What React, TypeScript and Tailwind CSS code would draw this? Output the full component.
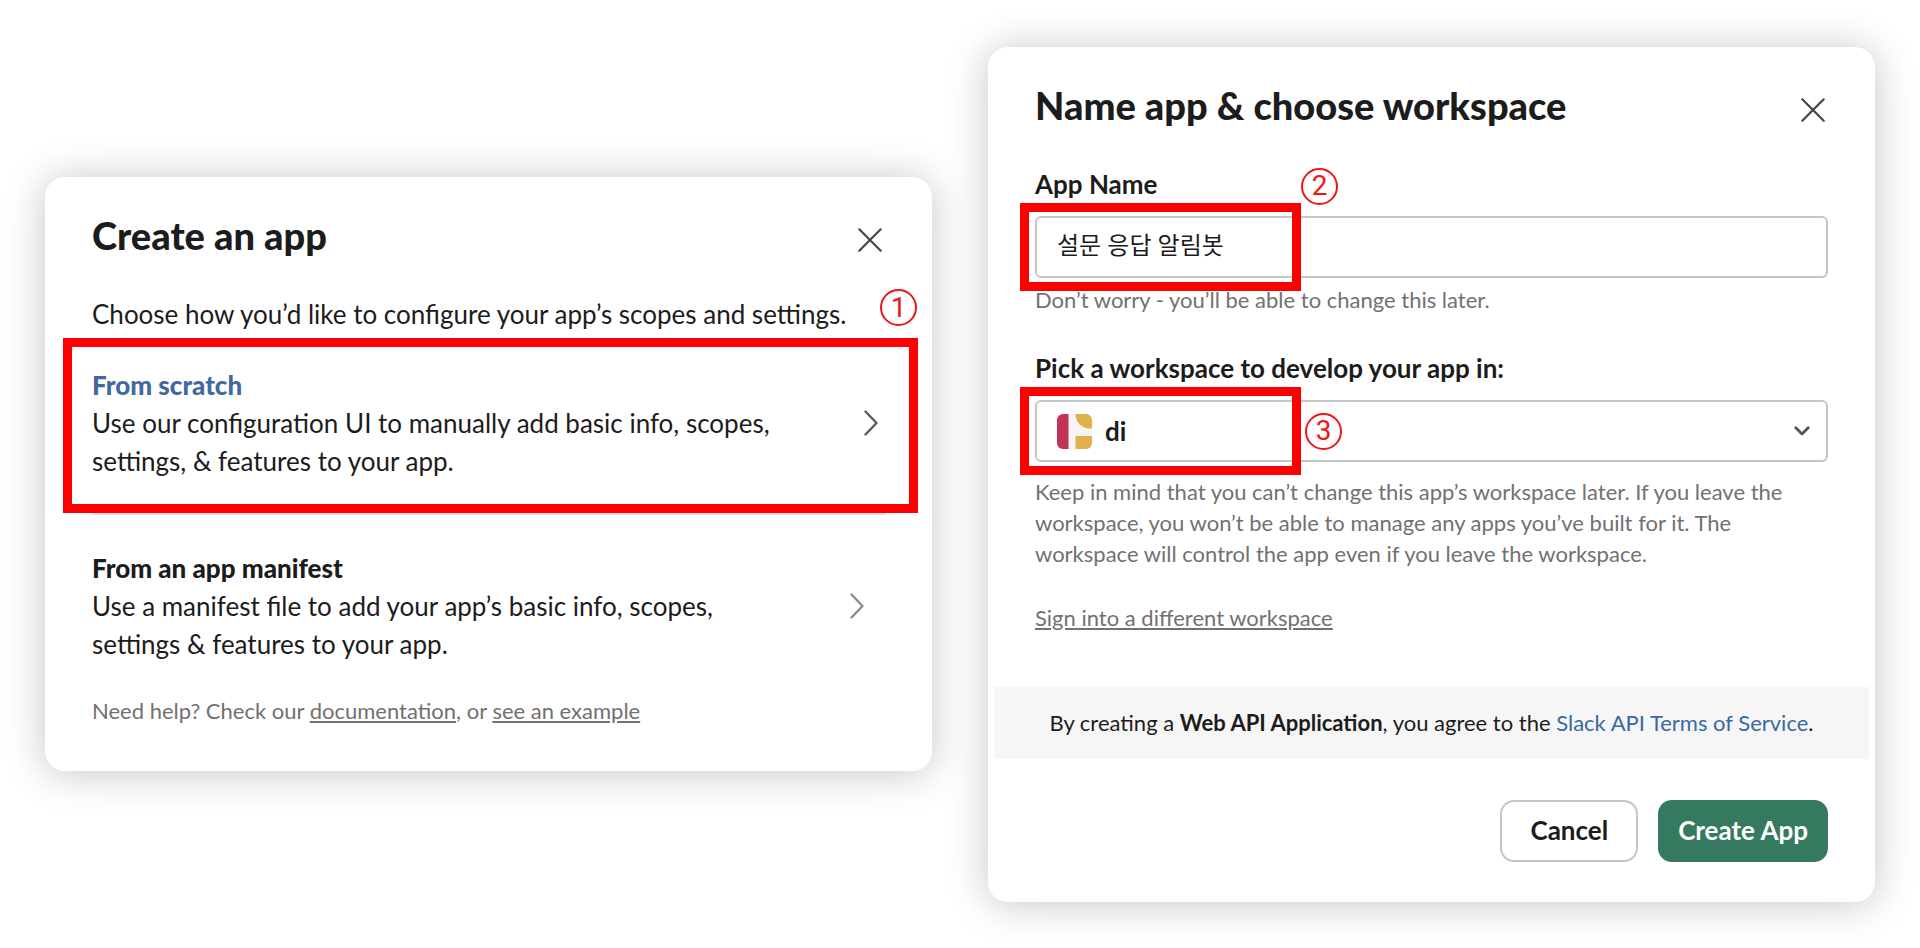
import type { ReactNode } from "react";

const outline = "pointer-events-none absolute border-9 border-[#ff0000]";
const marker =
  "pointer-events-none absolute flex size-[37px] items-center justify-center rounded-full border-2 border-[#ee1616] font-['Roboto',sans-serif] text-[28px] leading-8 font-normal text-[#ee1616]";
const heading = "text-[38px] leading-[46px] font-black";
const label = "text-[26px] leading-[38px] font-bold";
const hint = "text-[22px] leading-[31px] text-[#717171]";
const field =
  "block h-[62px] w-full rounded-md border-2 border-[#c6c6c6] bg-white outline-none";

function CloseButton() {
  return (
    <button type="button" aria-label="Close" className="mt-[11px] p-[5px]">
      <svg width="24" height="24" viewBox="0 0 24 24" fill="none" stroke="#454547" strokeWidth="2.2" strokeLinecap="round">
        <path d="M1.300 1.300 22.700 22.700M22.700 1.300 1.300 22.700" />
      </svg>
    </button>
  );
}

function ChevronRight({ color }: { color: string }) {
  return (
    <svg width="14" height="26" viewBox="0 0 14 26" fill="none" stroke={color} strokeWidth="2.4" strokeLinecap="round" strokeLinejoin="round">
      <path d="M1.500 1.500 12.500 13 1.500 24.500" />
    </svg>
  );
}

function Card({ title, children }: { title: string; children: ReactNode }) {
  return (
    <section className="rounded-[20px] bg-white pt-[35px] shadow-[0_2px_40px_rgba(0,0,0,0.23)]">
      <header className="flex h-[46px] items-start justify-between pr-[45px] pl-[47px]">
        <h2 className={heading}>{title}</h2>
        <CloseButton />
      </header>
      {children}
    </section>
  );
}

function WorkspaceLogo() {
  return (
    <svg
      className="pointer-events-none absolute top-[14px] left-[22px]"
      width="35"
      height="35"
      viewBox="0 0 35 35"
    >
      <rect width="35" height="35" rx="6" fill="#f8f3f5" />
      <path d="M6 0H11.500V35H6A6 6 0 0 1 0 29V6A6 6 0 0 1 6 0Z" fill="#c13458" />
      <path d="M18.500 0H29A6 6 0 0 1 35 6V14.500H33C25 14.500 18.500 8.500 18.500 0Z" fill="#dfb04c" />
      <path d="M18.500 22H35V29A6 6 0 0 1 29 35H18.500Z" fill="#dfb04c" />
    </svg>
  );
}

export default function App() {
  return (
    <main className="grid min-h-screen grid-cols-2 items-center gap-14 bg-white px-[45px] font-['Lato','Noto_Sans_CJK_KR',sans-serif] text-[#1d1c1d]">
      <Card title="Create an app">
        <div className="px-[47px] pt-[37px] pb-[45px] text-[26px] leading-[38px]">
          <p>Choose how you’d like to configure your app’s scopes and settings.</p>

          <div className="relative mt-[5px]">
            <button
              type="button"
              className="flex w-full items-center justify-between border-b-2 border-[#fbdcdc] pt-7 pr-[7px] pb-[33px] text-left"
            >
              <span>
                <strong className="block font-black text-[#41699d]">From scratch</strong>
                Use our configuration UI to manually add basic info, scopes,
                <br />
                settings, &amp; features to your app.
              </span>
              <ChevronRight color="#5b5b5d" />
            </button>
            <div className={`${outline} top-0 right-[-33px] bottom-0.5 left-[-29px]`} />
            <span className={`${marker} -top-[49px] -right-8`}>1</span>
          </div>

          <button type="button" className="mt-[34px] flex w-full items-center justify-between pr-[21px] text-left">
            <span>
              <strong className="block font-black">From an app manifest</strong>
              Use a manifest file to add your app’s basic info, scopes,
              <br />
              settings &amp; features to your app.
            </span>
            <ChevronRight color="#8b8b8d" />
          </button>

          <p className={`${hint} mt-8`}>
            Need help? Check our{" "}
            <a href="#documentation" className="underline">documentation</a>, or{" "}
            <a href="#example" className="underline">see an example</a>
          </p>
        </div>
      </Card>

      <Card title="Name app &amp; choose workspace">
        <form className="pt-[37px] pb-10" onSubmit={(e) => e.preventDefault()}>
          <div className="px-[47px]">
            <label htmlFor="app-name" className={`${label} block`}>App Name</label>
            <div className="relative mt-[13px]">
              <input
                id="app-name"
                type="text"
                defaultValue="설문 응답 알림봇"
                className={`${field} px-5 pb-1.5 text-2xl`}
              />
              <div className={`${outline} -top-[13px] -left-[15px] h-[88px] w-[281px]`} />
              <span className={`${marker} -top-12 left-[266px]`}>2</span>
            </div>
            <p className={`${hint} mt-1.5`}>Don’t worry - you’ll be able to change this later.</p>

            <label htmlFor="workspace" className={`${label} mt-[34px] block`}>
              Pick a workspace to develop your app in:
            </label>
            <div className="relative mt-[13px]">
              <select id="workspace" className={`${field} appearance-none pt-0.5 pl-[68px] text-[26px] font-bold`}>
                <option>di</option>
              </select>
              <WorkspaceLogo />
              <svg className="pointer-events-none absolute top-[26px] right-[18px]" width="16" height="10" viewBox="0 0 16 10" fill="none" stroke="#555557" strokeWidth="2.8" strokeLinecap="round" strokeLinejoin="round">
                <path d="M1.800 1.800 8 8 14.200 1.800" />
              </svg>
              <div className={`${outline} -top-[13px] -left-[15px] h-[88px] w-[281px]`} />
              <span className={`${marker} top-[13px] left-[270px]`}>3</span>
            </div>
            <p className={`${hint} mt-[14px]`}>
              Keep in mind that you can’t change this app’s workspace later. If you leave the
              workspace, you won’t be able to manage any apps you’ve built for it. The
              workspace will control the app even if you leave the workspace.
            </p>
            <p className={`${hint} mt-[33px]`}>
              <a href="#sign-in" className="underline">Sign into a different workspace</a>
            </p>
          </div>

          <p className="mx-1.5 mt-[54px] bg-[#f6f6f6] py-5 text-center text-[22px] leading-8">
            By creating a <strong className="font-bold">Web API Application</strong>, you agree to the{" "}
            <a href="#terms" className="text-[#3a68a3]">Slack API Terms of Service</a>.
          </p>

          <div className="mt-[41px] flex justify-end gap-5 px-[47px] text-[26px] font-bold">
            <button type="button" className="h-[62px] rounded-[14px] border-2 border-[#c6c6c6] px-7">
              Cancel
            </button>
            <button type="submit" className="h-[62px] rounded-[14px] bg-[#357a5e] px-5 text-white">
              Create App
            </button>
          </div>
        </form>
      </Card>
    </main>
  );
}
